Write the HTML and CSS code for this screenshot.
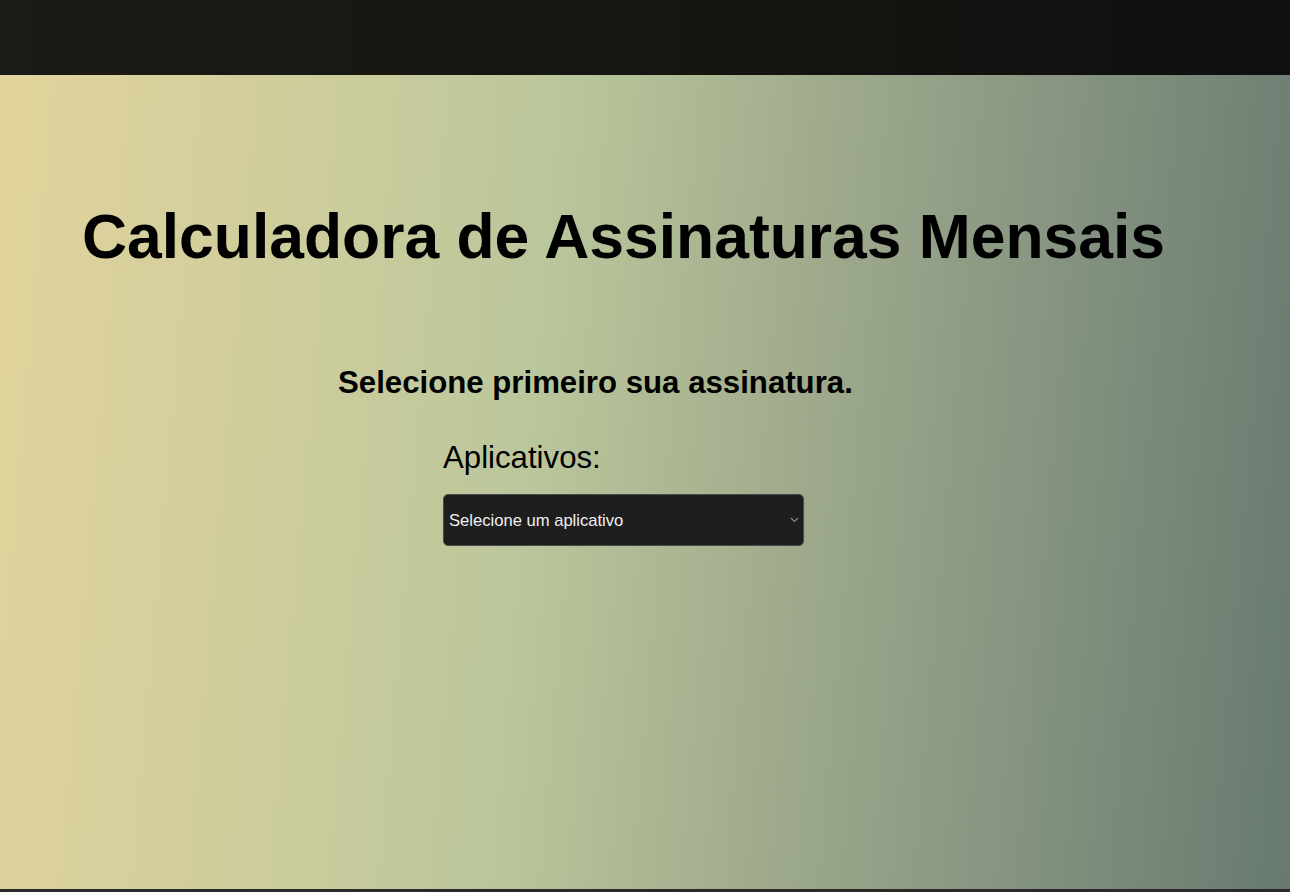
FILE: index.html
```html
<!DOCTYPE html>
<html lang="pt-BR">
<head>
<meta charset="utf-8">
<title>Calculadora de Assinaturas Mensais</title>
<link rel="stylesheet" href="styles.css">
</head>
<body>
<header class="topbar"></header>
<main class="hero">
  <h1 class="title">Calculadora de Assinaturas Mensais</h1>
  <div class="form-area">
    <h2 class="subtitle">Selecione primeiro sua assinatura.</h2>
    <div class="field">
      <label class="label" for="app">Aplicativos:</label>
      <div class="select-wrap">
        <select id="app" class="select">
          <option>Selecione um aplicativo</option>
        </select>
        <svg class="chev" width="9" height="6" viewBox="0 0 9 6"><path d="M1 1l3.5 3.5L8 1" fill="none" stroke="#8a8a8a" stroke-width="1.2"/></svg>
      </div>
    </div>
  </div>
</main>
</body>
</html>
```
FILE: styles.css
```css
* { box-sizing: border-box; }
html, body { margin: 0; padding: 0; }
body {
  background: #2a2a2a;
  font-family: "Liberation Sans", Arial, sans-serif;
  color: #000;
  height: 892px;
  overflow: hidden;
}
.topbar {
  height: 75px;
  background: linear-gradient(90deg, #1c1a14 0%, #171712 40%, #0f0f0f 100%);
}
.hero {
  height: 814px;
  background: linear-gradient(95deg, #e2d49c 0%, #c9cb9c 28%, #b9c69b 42%, #a1ac8d 60%, #879581 78%, #677a70 100%);
  padding-top: 122px;
}
.title {
  margin: 0;
  font-size: 62.4px;
  font-weight: 700;
  line-height: 80px;
  padding-left: 82px;
}
.form-area {
  margin-top: 87px;
  display: flex;
  flex-direction: column;
  align-items: flex-start;
}
.subtitle {
  margin: 0 0 0 338px;
  font-size: 31.2px;
  font-weight: 700;
  line-height: 38px;
}
.field {
  margin-left: 443px;
  margin-top: 37px;
  display: flex;
  flex-direction: column;
}
.label {
  font-size: 31.2px;
  line-height: 38px;
}
.select-wrap {
  position: relative;
  margin-top: 17px;
  width: 361px;
  height: 52px;
}
.select {
  appearance: none;
  -webkit-appearance: none;
  width: 100%;
  height: 100%;
  background: #1e1e1e;
  color: #f0f0f0;
  border: 1px solid #4a4a4a;
  border-radius: 5px;
  font-family: "Liberation Sans", Arial, sans-serif;
  font-size: 16.6px;
  padding: 0 5px;
}
.chev {
  position: absolute;
  right: 5px;
  top: 23px;
}
```
